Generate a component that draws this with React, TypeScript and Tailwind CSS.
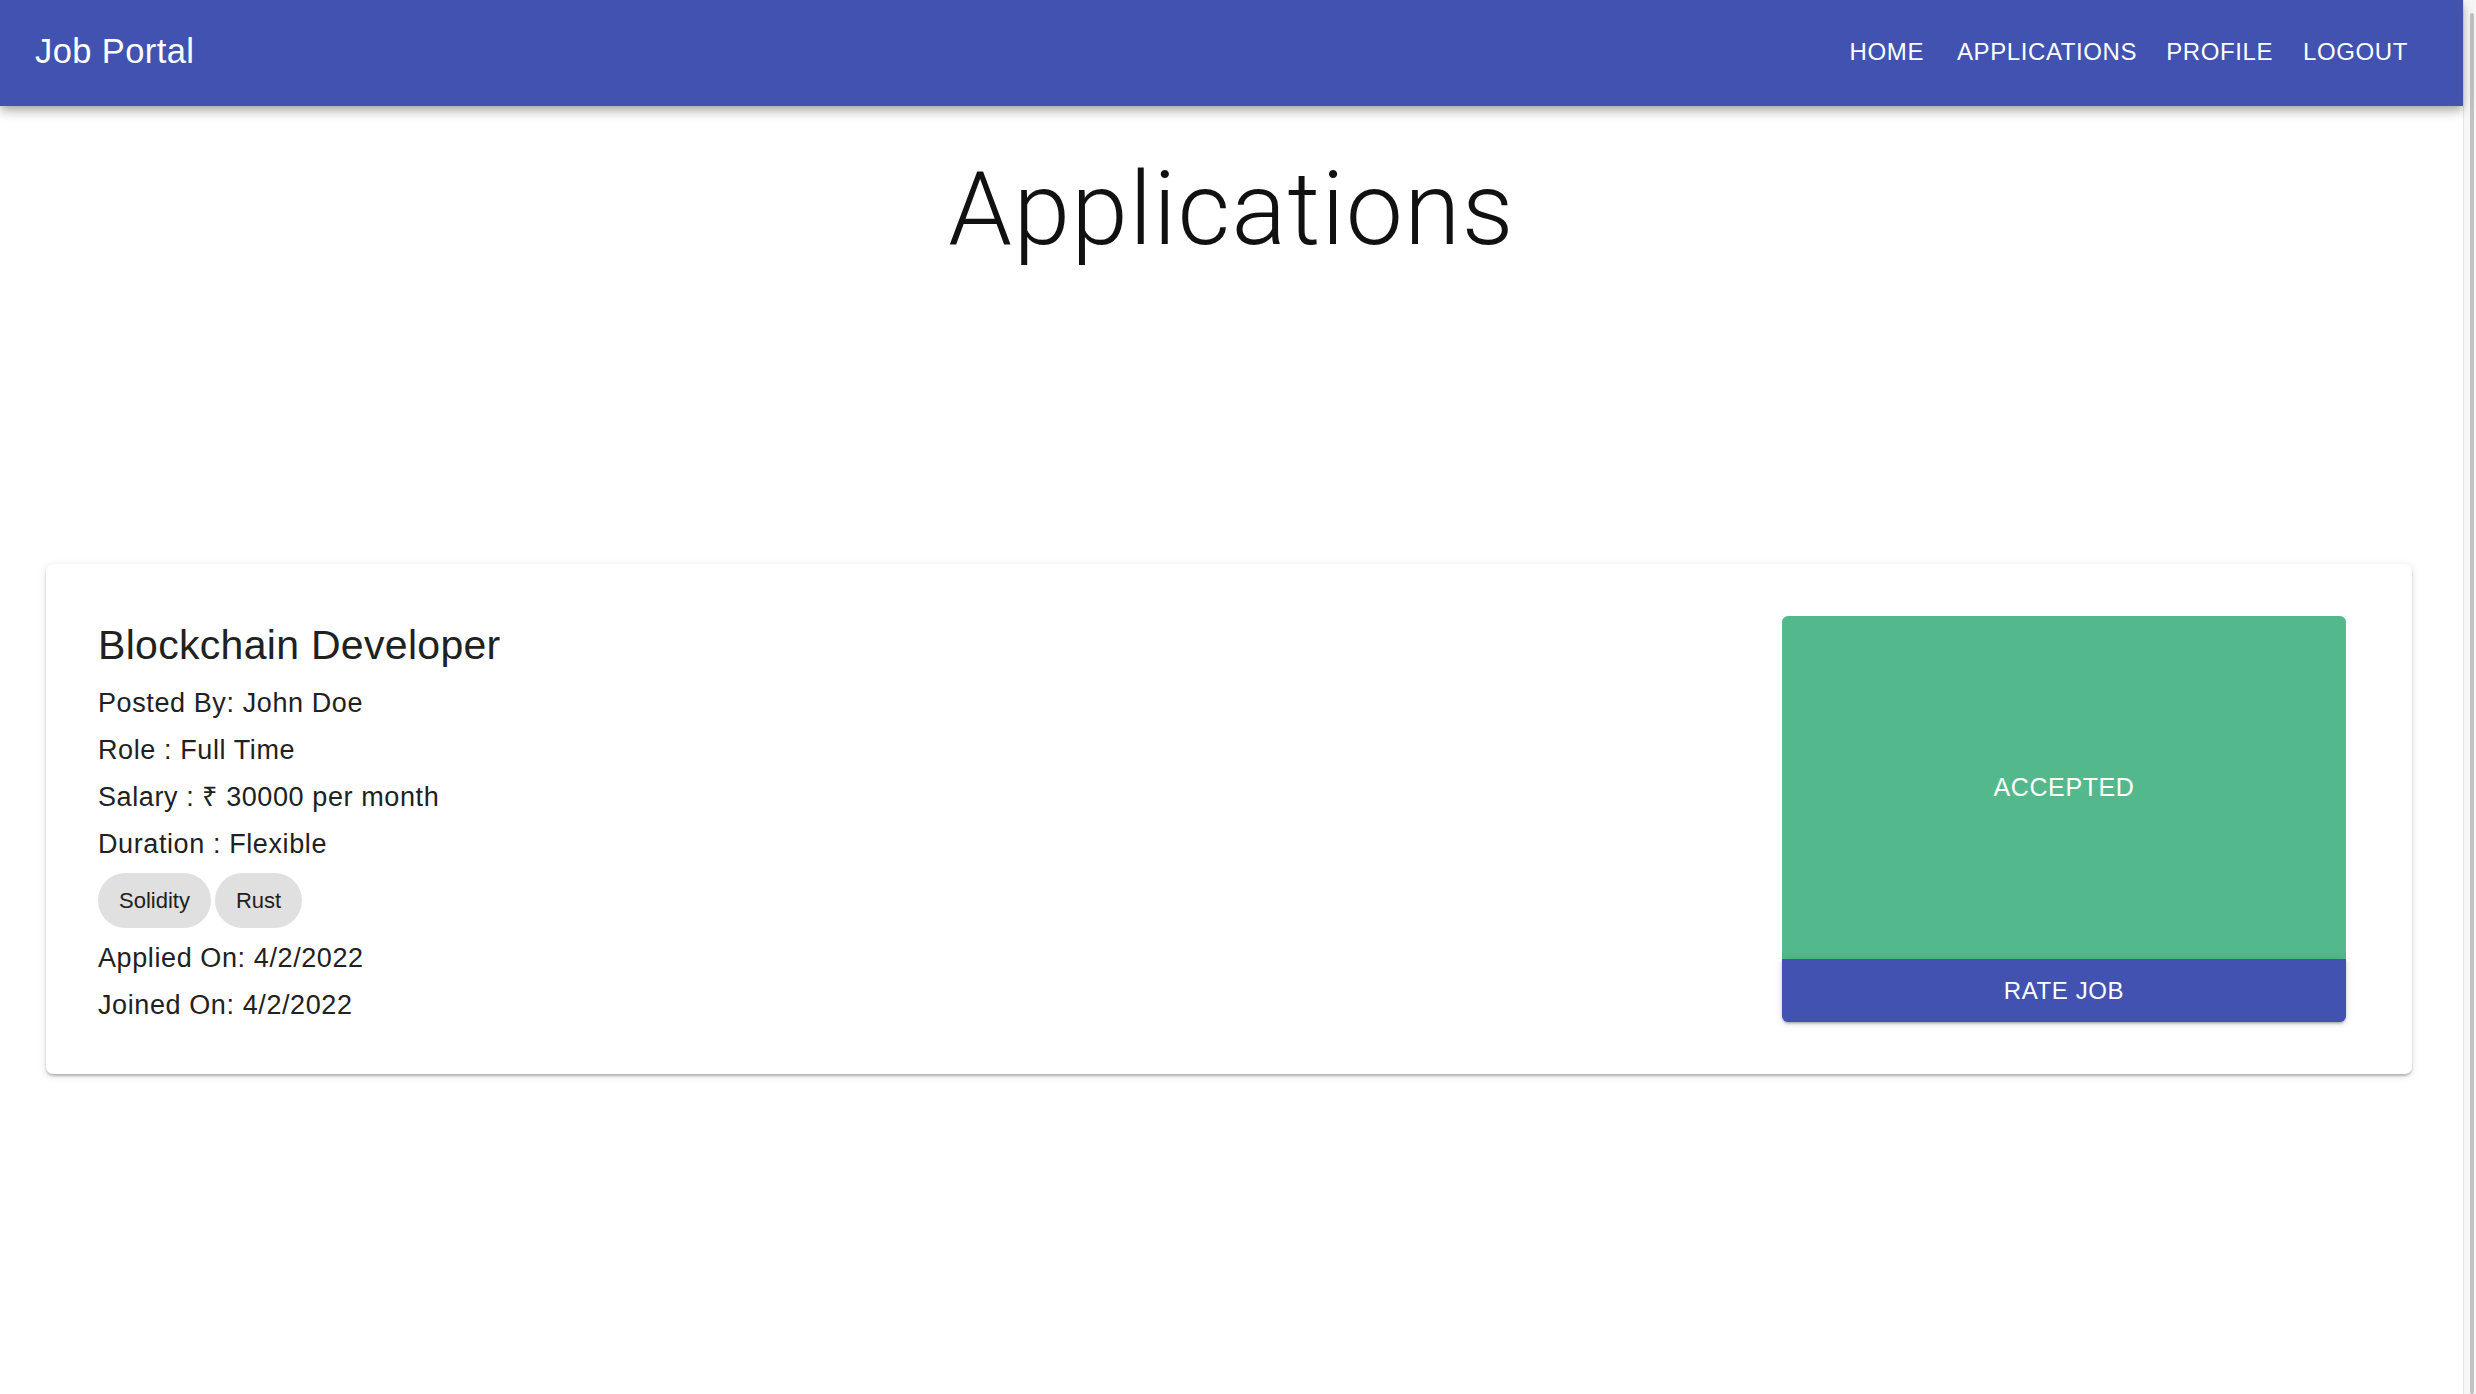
import React from 'react'

const details = [
  'Posted By: John Doe',
  'Role : Full Time',
  'Salary : ₹ 30000 per month',
  'Duration : Flexible',
]

const skills = ['Solidity', 'Rust']

function NavBar() {
  return (
    <header className="relative z-10 flex h-[106px] items-center bg-[#4152b0] pb-[3px] pl-[35px] pr-[55px] text-white shadow-[0_3px_7px_-2px_rgba(0,0,0,0.2),0_7px_8px_0_rgba(0,0,0,0.14),0_2px_17px_0_rgba(0,0,0,0.12)]">
      <div className="flex-1 text-[34.5px] leading-none tracking-[0.4px]">Job Portal</div>
      <nav className="flex items-center text-[24px] leading-none tracking-[0.6px]">
        <span>HOME</span>
        <span className="ml-[33px]">APPLICATIONS</span>
        <span className="ml-[29px]">PROFILE</span>
        <span className="ml-[30px]">LOGOUT</span>
      </nav>
    </header>
  )
}

function ApplicationCard() {
  return (
    <div className="mt-[295px] ml-[46px] mr-[51px] flex items-start rounded-[7px] bg-white pt-[52px] pb-[45px] pl-[52px] pr-[66px] shadow-[0_3px_3px_-2px_rgba(0,0,0,0.2),0_2px_3px_0_rgba(0,0,0,0.14),0_2px_8px_0_rgba(0,0,0,0.12)]">
      <div className="flex-1 text-[#212121]">
        <h2 className="mb-[6px] text-[41px] leading-[58px] tracking-[0.3px]">Blockchain Developer</h2>
        {details.map((d) => (
          <p key={d} className="text-[27px] leading-[47px] tracking-[0.6px]">
            {d}
          </p>
        ))}
        <div className="mt-[5px] flex gap-[4px]">
          {skills.map((s) => (
            <span
              key={s}
              className="flex h-[55px] items-center rounded-full bg-[#e0e0e0] px-[21px] text-[22px] text-[#212121]"
            >
              {s}
            </span>
          ))}
        </div>
        <p className="mt-[7px] text-[27px] leading-[47px] tracking-[0.6px]">Applied On: 4/2/2022</p>
        <p className="text-[27px] leading-[47px] tracking-[0.6px]">Joined On: 4/2/2022</p>
      </div>
      <div className="flex w-[564px] flex-col">
        <div className="flex h-[343px] items-center justify-center rounded-t-[6px] bg-[#53b88c] text-[25px] tracking-[0.6px] text-white">
          ACCEPTED
        </div>
        <button className="flex h-[63px] items-center justify-center rounded-b-[6px] bg-[#4152b0] text-[24px] tracking-[0.6px] text-white shadow-[0_3px_2px_-2px_rgba(0,0,0,0.2),0_2px_3px_0_rgba(0,0,0,0.14),0_1px_8px_0_rgba(0,0,0,0.12)]">
          RATE JOB
        </button>
      </div>
    </div>
  )
}

export default function App() {
  return (
    <div className="flex min-h-screen bg-white font-['Liberation_Sans',Arial,sans-serif]">
      <main className="min-w-0 flex-1">
        <NavBar />
        <h1 className="mt-[43px] text-center font-['Roboto',sans-serif] text-[102px] leading-[120px] font-light tracking-[1.3px] text-[#111]">
          Applications
        </h1>
        <ApplicationCard />
      </main>
      <aside className="flex w-[13px] border-l border-[#e6e6e6] bg-[#f7f7f7] pt-[13px] pl-[6px]">
        <div className="w-[4px] rounded-full bg-[#c2c2c2]" />
      </aside>
    </div>
  )
}
